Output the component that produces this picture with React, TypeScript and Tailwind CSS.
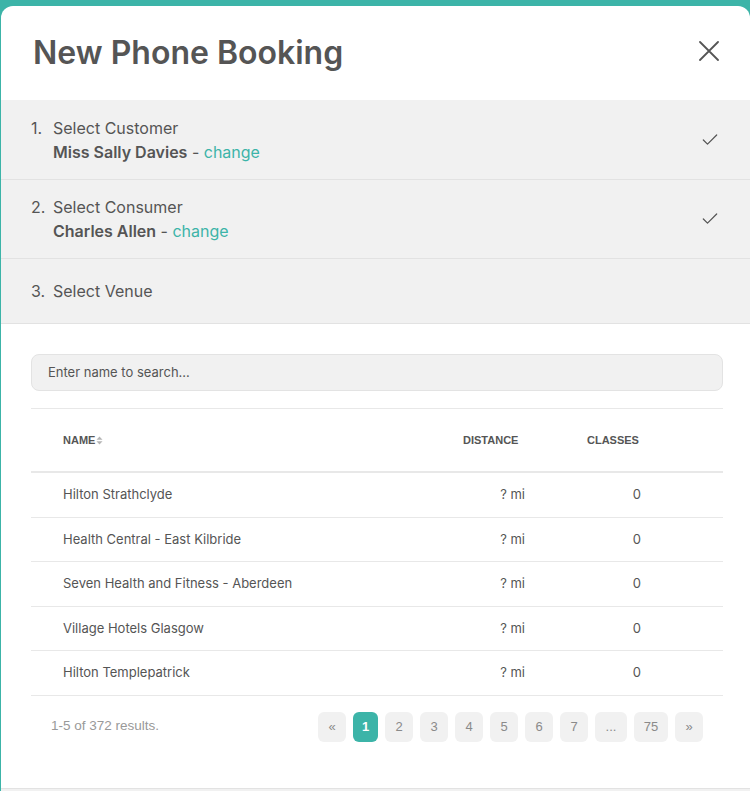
import { Check } from "lucide-react";

const venues = [
  "Hilton Strathclyde",
  "Health Central - East Kilbride",
  "Seven Health and Fitness - Aberdeen",
  "Village Hotels Glasgow",
  "Hilton Templepatrick",
];

const pages = ["«", "1", "2", "3", "4", "5", "6", "7", "...", "75", "»"];

function Step({
  num,
  title,
  name,
  done,
  h,
}: {
  num: string;
  title: string;
  name?: string;
  done?: boolean;
  h: string;
}) {
  return (
    <div
      className={`flex items-center justify-between border-b border-[#e2e2e2] bg-[#f1f1f1] pl-[30px] pr-[30px] ${h}`}
    >
      <div className="flex text-[16px] leading-[24px] text-[#555]">
        <span className="w-[22px]">{num}</span>
        <div>
          <div>{title}</div>
          {name && (
            <div>
              <span className="font-semibold">{name}</span>
              <span> - </span>
              <span className="text-[#3cb4a8]">change</span>
            </div>
          )}
        </div>
      </div>
      {done && <Check className="h-[20px] w-[20px] text-[#555]" strokeWidth={1.5} />}
    </div>
  );
}

export default function App() {
  return (
    <div className="min-h-screen bg-[#3cb4a8] pl-px pt-[6px] font-['Inter',sans-serif]">
      <div className="w-[749px] overflow-hidden rounded-t-[12px] bg-white">
        <div className="flex h-[94px] items-center justify-between pl-[32px] pr-[31px]">
          <h1 className="text-[32px] font-semibold text-[#555]">New Phone Booking</h1>
          <svg width="20" height="20" viewBox="0 0 20 20" className="mt-[-4px]">
            <path d="M1 1 L19 19 M19 1 L1 19" stroke="#555" strokeWidth="1.8" strokeLinecap="round" />
          </svg>
        </div>

        <Step num="1." title="Select Customer" name="Miss Sally Davies" done h="h-[80px]" />
        <Step num="2." title="Select Consumer" name="Charles Allen" done h="h-[79px]" />
        <Step num="3." title="Select Venue" h="h-[65px]" />

        <div className="pl-[30px] pr-[27px] pt-[30px] pb-[46px]">
          <div className="flex h-[37px] items-center rounded-[8px] border border-[#e3e3e3] bg-[#f1f1f1] px-4 text-[13px] text-[#555]">
            Enter name to search...
          </div>

          <div className="mt-[17px] border-t border-[#e8e8e8]">
            <div className="flex h-[64px] items-center border-b-2 border-[#e8e8e8] font-['Liberation_Sans',Arial,sans-serif] text-[11px] font-bold text-[#555]">
              <div className="flex w-[400px] items-center pl-8">
                NAME
                <svg width="7" height="9" viewBox="0 0 7 9" className="ml-[1px]">
                  <path d="M3.5 0.5 L6.5 3.8 H0.5 Z" fill="#b5b5b5" />
                  <path d="M3.5 8.5 L6.5 5.2 H0.5 Z" fill="#b5b5b5" />
                </svg>
              </div>
              <div className="w-[125px] pl-8">DISTANCE</div>
              <div className="w-[125px] pl-[31px]">CLASSES</div>
            </div>

            {venues.map((v) => (
              <div
                key={v}
                className="flex h-[44.5px] items-center border-b border-[#e8e8e8] text-[13px] text-[#555]"
              >
                <div className="w-[400px] pl-8">{v}</div>
                <div className="w-[125px] pr-[31px] text-right">? mi</div>
                <div className="w-[125px] pr-[40px] text-right">0</div>
              </div>
            ))}
          </div>

          <div className="mt-[16px] flex items-center justify-between pl-5 pr-5 font-['Liberation_Sans',Arial,sans-serif] text-[13.5px]">
            <span className="text-[#999]">1-5 of 372 results.</span>
            <div className="flex gap-[7px] text-[13px]">
              {pages.map((p) => (
                <div
                  key={p}
                  className={`flex h-[30px] items-center justify-center rounded-[6px] ${
                    p === "1"
                      ? "w-[25px] bg-[#3cb4a8] font-bold text-white"
                      : p === "..."
                        ? "w-[32px] bg-[#f1f1f1] text-[#8a8a8a]"
                        : p === "75"
                          ? "w-[34px] bg-[#f1f1f1] text-[#8a8a8a]"
                          : "w-[28px] bg-[#f1f1f1] text-[#8a8a8a]"
                  }`}
                >
                  {p}
                </div>
              ))}
            </div>
          </div>
        </div>

        <div className="h-[20px] border-t border-[#e2e2e2] bg-[#f1f1f1]" />
      </div>
    </div>
  );
}
